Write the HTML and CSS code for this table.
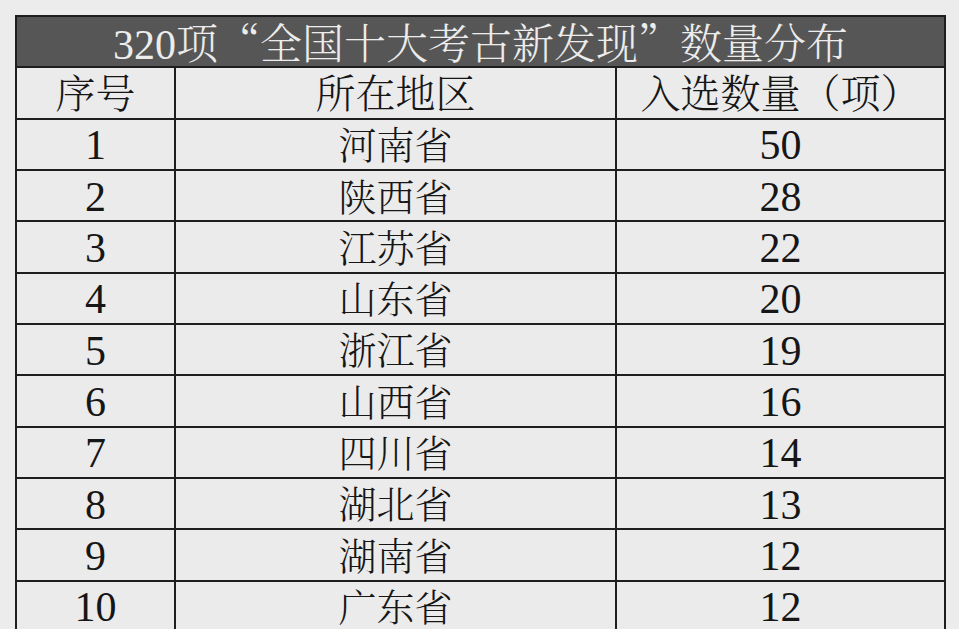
FILE: index.html
```html
<!DOCTYPE html>
<html lang="zh-CN">
<head>
<meta charset="utf-8">
<title>320项全国十大考古新发现数量分布</title>
<link rel="stylesheet" href="styles.css">
</head>
<body>
<table class="dist">
  <colgroup>
    <col class="c-no">
    <col class="c-region">
    <col class="c-count">
  </colgroup>
  <thead>
    <tr class="title-row">
      <th colspan="3">320项<span class="q">“</span>全国十大考古新发现<span class="q">”</span>数量分布</th>
    </tr>
    <tr class="head-row">
      <th>序号</th>
      <th>所在地区</th>
      <th>入选数量（项）</th>
    </tr>
  </thead>
  <tbody>
    <tr><td>1</td><td>河南省</td><td>50</td></tr>
    <tr><td>2</td><td>陕西省</td><td>28</td></tr>
    <tr><td>3</td><td>江苏省</td><td>22</td></tr>
    <tr><td>4</td><td>山东省</td><td>20</td></tr>
    <tr><td>5</td><td>浙江省</td><td>19</td></tr>
    <tr><td>6</td><td>山西省</td><td>16</td></tr>
    <tr><td>7</td><td>四川省</td><td>14</td></tr>
    <tr><td>8</td><td>湖北省</td><td>13</td></tr>
    <tr><td>9</td><td>湖南省</td><td>12</td></tr>
    <tr><td>10</td><td>广东省</td><td>12</td></tr>
  </tbody>
</table>
</body>
</html>
```

FILE: styles.css
```css
html, body {
  margin: 0;
  padding: 0;
  background: #ececec;
  overflow: hidden;
}

.dist {
  margin: 15px 0 0 15px;
  width: 929px;
  border-collapse: collapse;
  table-layout: fixed;
  border: 2px solid #1e1e1e;
  font-family: "Liberation Serif", "Noto Serif CJK SC", "Noto Sans CJK SC", serif;
  color: #161616;
  background: #ebebeb;
}

.c-no { width: 159px; }
.c-region { width: 441px; }
.c-count { width: 329px; }

.dist th,
.dist td {
  border: 2px solid #1e1e1e;
  padding: 4px 0 0 0;
  text-align: center;
  vertical-align: middle;
  font-weight: 300;
  line-height: 0.85;
  white-space: nowrap;
}

.dist tr {
  height: 51.33px;
}

.title-row th {
  background: #565656;
  color: #ececec;
  font-size: 42px;
}

.q {
  font-family: "Noto Serif CJK SC", "Noto Sans CJK SC", sans-serif;
}

.head-row th {
  font-size: 40px;
}

.dist td {
  font-size: 38px;
}

.dist td:first-child,
.dist td:last-child {
  font-size: 42px;
}
```
